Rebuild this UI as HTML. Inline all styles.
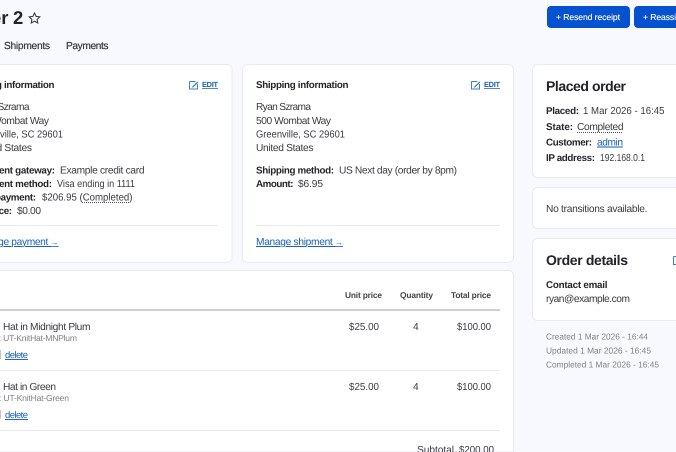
<!DOCTYPE html>
<html><head><meta charset="utf-8"><style>
html,body{margin:0;padding:0;width:676px;height:452px;overflow:hidden;background:#f8f9fe}
svg{display:block;font-family:"Liberation Sans",sans-serif;font-size:10.2px;fill:#3a3b41;text-rendering:geometricPrecision}
.b{font-weight:bold;font-size:9.8px;fill:#24252c}
.m{stroke:#33343a;stroke-width:.2px}
.g{font-size:8.6px;fill:#808088}
.h{font-size:8.4px;font-weight:bold;fill:#44454d}
.l{fill:#1a5fb8;text-decoration:underline}
.e{font-size:7.4px;font-weight:bold;fill:#1a5fb8;text-decoration:underline}
.t{font-size:14px;font-weight:bold;fill:#22232a}
.card{fill:#fff;stroke:#e8ebf2}
.d{stroke:#e8e9ec;stroke-width:1}
.dot{stroke:#555;stroke-width:1;stroke-dasharray:1 1}
.i{fill:none;stroke:#3a82cc;stroke-width:1}
.a{font-size:8px}
.ti{font-size:18.500px;font-weight:bold;fill:#22232a}
</style></head><body>
<svg width="676" height="452" viewBox="0 0 676 452" xmlns="http://www.w3.org/2000/svg">
<text x="-9" y="24" class="ti">er</text>
<text x="13" y="24" class="ti">2</text>
<path d="M34.500 13l1.600 3.400 3.700.5-2.700 2.500.7 3.600-3.300-1.800-3.300 1.800.7-3.600-2.700-2.500 3.700-.5z" fill="none" stroke="#33343a" stroke-width="1"/>
<text x="4" y="49" textLength="46" class="m">Shipments</text>
<text x="66" y="49" textLength="42.500" class="m">Payments</text>

<rect x="547" y="6" width="83" height="22" rx="4" fill="#0452d0"/>
<path d="M638 6h38v22h-38a4 4 0 0 1-4-4v-14a4 4 0 0 1 4-4z" fill="#0452d0"/>
<text x="556" y="20" textLength="64" style="font-size:8.600px;fill:#fff;stroke:#fff;stroke-width:.12px">+ Resend receipt</text>
<text x="643" y="20" textLength="33" style="font-size:8.600px;fill:#fff;stroke:#fff;stroke-width:.12px">+ Reassi</text>

<path class="card" d="M0 64.500h227a5 5 0 0 1 5 5v188a5 5 0 0 1-5 5h-227"/>
<rect class="card" x="242.500" y="64.500" width="271" height="198" rx="5"/>
<path class="card" d="M0 270.500h508.500a5 5 0 0 1 5 5v176.500h-513.500"/>
<path class="card" d="M676 64.500h-138.500a5 5 0 0 0-5 5v103a5 5 0 0 0 5 5h138.500"/>
<path class="card" d="M676 187.500h-138.500a5 5 0 0 0-5 5v31a5 5 0 0 0 5 5h138.500"/>
<path class="card" d="M676 238.500h-138.500a5 5 0 0 0-5 5v72a5 5 0 0 0 5 5h138.500"/>

<text x="-26" y="88" textLength="80.500" class="b">Billing information</text>
<path class="i" d="M189.500 81.500h6M189.500 81.500v7.500h8v-5"/><path d="M192.500 86.500l5-5 .8.8-5 5-1.300.5z" fill="#1a6fc0"/>
<text x="202" y="87" textLength="16" class="e">EDIT</text>
<text x="-26" y="110" textLength="55.500">Ryan Szrama</text>
<text x="-26" y="124" textLength="75">500 Wombat Way</text>
<text x="-26" y="137.500" textLength="89" lengthAdjust="spacingAndGlyphs">Greenville, SC 29601</text>
<text x="-26" y="151" textLength="58">United States</text>
<text x="-26" y="173.500" textLength="81" class="b">Payment gateway:</text><text x="60" y="173.500" textLength="84.500">Example credit card</text>
<text x="-26" y="187" textLength="78" class="b">Payment method:</text><text x="57" y="187" textLength="78" lengthAdjust="spacingAndGlyphs">Visa ending in 1111</text>
<text x="-26" y="200.500" textLength="62" class="b">Last payment:</text><text x="42" y="200.500" textLength="90.500" lengthAdjust="spacingAndGlyphs">$206.95 (Completed)</text>
<line class="dot" x1="82" y1="202.500" x2="129" y2="202.500"/>
<text x="-26" y="214" textLength="38" class="b">Balance:</text><text x="17" y="214" textLength="24">$0.00</text>
<line class="d" x1="0" y1="225.500" x2="218" y2="225.500"/>
<text x="-26" y="245" textLength="84.500" class="l">Manage payment <tspan class="a">→</tspan></text>

<text x="256" y="88" textLength="92.500" class="b">Shipping information</text>
<path class="i" d="M471.500 81.500h6M471.500 81.500v7.500h8v-5"/><path d="M474.500 86.500l5-5 .8.8-5 5-1.300.5z" fill="#1a6fc0"/>
<text x="484" y="87" textLength="16" class="e">EDIT</text>
<text x="256" y="110" textLength="55">Ryan Szrama</text>
<text x="256" y="124" textLength="75">500 Wombat Way</text>
<text x="256" y="137.500" textLength="89" lengthAdjust="spacingAndGlyphs">Greenville, SC 29601</text>
<text x="256" y="151" textLength="57.500">United States</text>
<text x="256" y="173.500" textLength="78" class="b">Shipping method:</text><text x="339" y="173.500" textLength="118">US Next day (order by 8pm)</text>
<text x="256" y="187" textLength="37.500" class="b">Amount:</text><text x="298" y="187" textLength="25">$6.95</text>
<line class="d" x1="256" y1="225.500" x2="500" y2="225.500"/>
<text x="256" y="245" textLength="87" class="l">Manage shipment <tspan class="a">→</tspan></text>

<text x="345" y="298" textLength="37" class="h">Unit price</text>
<text x="400" y="298" textLength="33" class="h">Quantity</text>
<text x="451" y="298" textLength="40" class="h">Total price</text>
<rect x="0" y="309" width="500" height="2" fill="#cfcfd2"/>

<text x="3" y="330" textLength="87.500">Hat in Midnight Plum</text>
<text x="-18" y="341" class="g" textLength="95">SKU: UT-KnitHat-MNPlum</text>
<rect x="0" y="350" width="1" height="9" fill="#c4c4c8"/>
<text x="5" y="358" textLength="23" class="l" style="font-size:9.500px">delete</text>
<text x="349" y="330" textLength="30" lengthAdjust="spacingAndGlyphs">$25.00</text>
<text x="413" y="330" textLength="6">4</text>
<text x="457" y="330" textLength="34" lengthAdjust="spacingAndGlyphs">$100.00</text>
<line class="d" x1="0" y1="370.500" x2="500" y2="370.500"/>

<text x="3" y="390" textLength="53">Hat in Green</text>
<text x="-18" y="401" class="g" textLength="87">SKU: UT-KnitHat-Green</text>
<rect x="0" y="410" width="1" height="9" fill="#c4c4c8"/>
<text x="5" y="418" textLength="23" class="l" style="font-size:9.500px">delete</text>
<text x="349" y="390" textLength="30" lengthAdjust="spacingAndGlyphs">$25.00</text>
<text x="413" y="390" textLength="6">4</text>
<text x="457" y="390" textLength="34" lengthAdjust="spacingAndGlyphs">$100.00</text>
<line class="d" x1="0" y1="430.500" x2="500" y2="430.500"/>
<text x="417" y="453" textLength="37">Subtotal</text>
<text x="459" y="453" textLength="35" lengthAdjust="spacingAndGlyphs">$200.00</text>

<text x="546" y="91" textLength="80" class="t">Placed order</text>
<text x="546" y="114" textLength="33" class="b">Placed:</text><text x="583" y="114" textLength="81.500" lengthAdjust="spacingAndGlyphs">1 Mar 2026 - 16:45</text>
<text x="546" y="130" textLength="27" class="b">State:</text><text x="577" y="130" textLength="46.500">Completed</text>
<line class="dot" x1="577" y1="132.500" x2="623" y2="132.500"/>
<text x="546" y="145.500" textLength="46" class="b">Customer:</text><text x="597" y="145.500" textLength="26" class="l">admin</text>
<text x="546" y="161" textLength="49" class="b">IP address:</text><text x="600" y="161" textLength="45" lengthAdjust="spacingAndGlyphs">192.168.0.1</text>
<text x="546" y="212" textLength="101.500">No transitions available.</text>
<text x="546" y="265" textLength="82" class="t">Order details</text>
<path class="i" d="M673.500 256.500h2.500M673.500 256.500v8h2.500"/>
<text x="546" y="288" textLength="61.500" class="b">Contact email</text>
<text x="546" y="302" textLength="84">ryan@example.com</text>
<text x="546" y="339.500" textLength="102" class="g" lengthAdjust="spacingAndGlyphs">Created 1 Mar 2026 - 16:44</text>
<text x="546" y="353.500" textLength="105" class="g" lengthAdjust="spacingAndGlyphs">Updated 1 Mar 2026 - 16:45</text>
<text x="546" y="367.500" textLength="113" class="g" lengthAdjust="spacingAndGlyphs">Completed 1 Mar 2026 - 16:45</text>
</svg>
</body></html>
